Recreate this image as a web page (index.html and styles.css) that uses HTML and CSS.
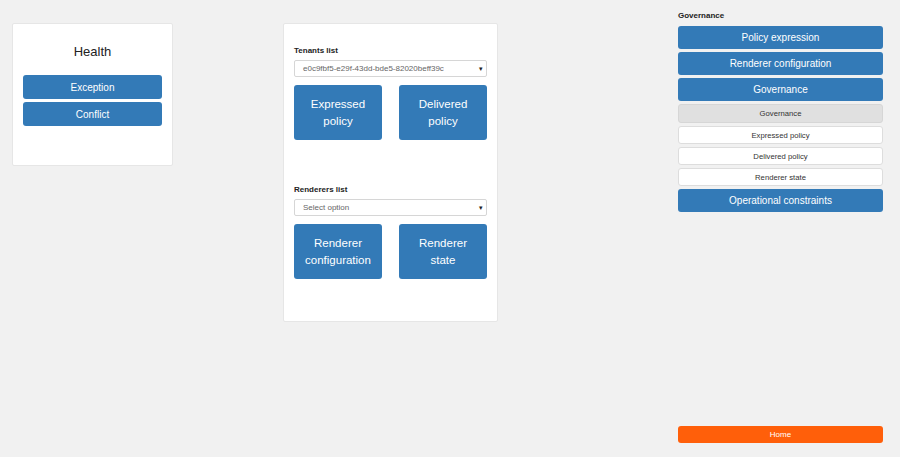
FILE: index.html
```html
<!DOCTYPE html>
<html lang="en">
<head>
  <meta charset="UTF-8" />
  <meta name="viewport" content="width=device-width, initial-scale=1.0"/>
  <title>Governance</title>
  <link rel="stylesheet" href="styles.css">
</head>
<body>
  <div class="page">
    <div class="col-left">
      <div class="card health-card">
        <h2>Health</h2>
        <button class="btn btn-blue btn-health">Exception</button>
        <button class="btn btn-blue btn-health">Conflict</button>
      </div>
    </div>

    <div class="col-middle">
      <div class="card lists-card">
        <div class="list-block">
          <label class="list-label">Tenants list</label>
          <div class="select-box">
            <span>e0c9fbf5-e29f-43dd-bde5-82020beff39c</span>
            <span class="caret">&#9662;</span>
          </div>
          <div class="big-row">
            <button class="btn btn-blue btn-big">Expressed<br>policy</button>
            <button class="btn btn-blue btn-big">Delivered<br>policy</button>
          </div>
        </div>

        <div class="list-block renderers">
          <label class="list-label">Renderers list</label>
          <div class="select-box">
            <span>Select option</span>
            <span class="caret">&#9662;</span>
          </div>
          <div class="big-row">
            <button class="btn btn-blue btn-big">Renderer<br>configuration</button>
            <button class="btn btn-blue btn-big">Renderer<br>state</button>
          </div>
        </div>
      </div>
    </div>

    <div class="col-right">
      <div class="menu-title">Governance</div>
      <button class="btn btn-blue btn-menu">Policy expression</button>
      <button class="btn btn-blue btn-menu">Renderer configuration</button>
      <button class="btn btn-blue btn-menu">Governance</button>
      <button class="btn btn-sub active">Governance</button>
      <button class="btn btn-sub">Expressed policy</button>
      <button class="btn btn-sub">Delivered policy</button>
      <button class="btn btn-sub">Renderer state</button>
      <button class="btn btn-blue btn-menu">Operational constraints</button>
      <button class="btn btn-home">Home</button>
    </div>
  </div>
</body>
</html>
```

FILE: styles.css
```css
body {
  font-family: "Liberation Sans", Arial, sans-serif;
  background: #f1f1f1;
  margin: 0;
  padding: 0;
  color: #333;
}

.page {
  display: flex;
  height: 457px;
  box-sizing: border-box;
}

.card {
  background: #fff;
  border: 1px solid #e6e6e6;
  border-radius: 2px;
  box-sizing: border-box;
}

.btn {
  display: block;
  border: none;
  border-radius: 3px;
  font-family: inherit;
  cursor: pointer;
  padding: 0;
  box-sizing: border-box;
}

.btn-blue {
  background: #337ab7;
  color: #fff;
}

/* left column */
.col-left {
  padding: 23px 0 0 12px;
}

.health-card {
  width: 161px;
  height: 143px;
  padding: 0 10px;
}

.health-card h2 {
  margin: 20px 0 15px;
  text-align: center;
  font-size: 13px;
  font-weight: normal;
  color: #222;
  line-height: 16px;
}

.btn-health {
  width: 100%;
  height: 24px;
  font-size: 10px;
  margin-bottom: 3px;
}

/* middle column */
.col-middle {
  padding: 23px 0 0 110px;
}

.lists-card {
  width: 215px;
  height: 299px;
  padding: 22px 10px 0;
}

.list-label {
  display: block;
  font-size: 8px;
  font-weight: bold;
  color: #222;
  line-height: 10px;
  margin-bottom: 4px;
}

.select-box {
  display: flex;
  justify-content: space-between;
  align-items: center;
  height: 17px;
  border: 1px solid #d6d6d6;
  border-radius: 2px;
  box-sizing: border-box;
  padding: 0 3px 0 8px;
  font-size: 8px;
  color: #666;
  margin-bottom: 8px;
}

.caret {
  font-size: 7px;
  color: #222;
}

.big-row {
  display: flex;
  justify-content: space-between;
}

.btn-big {
  width: 88px;
  height: 55px;
  font-size: 11.5px;
  line-height: 17px;
}

.renderers {
  margin-top: 45px;
}

/* right column */
.col-right {
  width: 205px;
  margin-left: 180px;
  padding: 11px 0 14px;
  display: flex;
  flex-direction: column;
  box-sizing: border-box;
}

.menu-title {
  font-size: 8px;
  font-weight: bold;
  color: #222;
  line-height: 10px;
  margin-bottom: 5px;
}

.btn-menu {
  width: 100%;
  height: 23px;
  font-size: 10px;
  margin-bottom: 3px;
}

.btn-sub {
  width: 100%;
  height: 18px;
  font-size: 7.7px;
  background: #fff;
  color: #333;
  border: 1px solid #ddd;
  margin-bottom: 3px;
}

.btn-sub.active {
  height: 19px;
  background: #e0e0e0;
  border-color: #d6d6d6;
}

.btn-home {
  margin-top: auto;
  width: 100%;
  height: 17px;
  background: #ff5f0a;
  color: #fff;
  font-size: 8px;
}
```
